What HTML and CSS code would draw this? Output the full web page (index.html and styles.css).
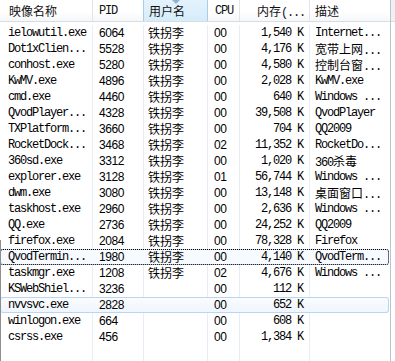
FILE: index.html
```html
<!DOCTYPE html>
<html lang="zh-CN">
<head>
  <meta charset="UTF-8">
  <title>任务管理器 - 进程</title>
  <link rel="stylesheet" href="styles.css">
</head>
<body>

<div class="taskview">
  <div class="list">
    <div class="head">
      <div class="cell name">映像名称</div>
      <div class="cell pid mono">PID</div>
      <div class="cell user sorted">用户名<span class="arrow"></span></div>
      <div class="cell cpu mono">CPU</div>
      <div class="cell mem">内存<span class="mono">(...</span></div>
      <div class="cell desc">描述</div>
    </div>
    <div class="rows" id="rows">
      <!-- 进程行由脚本生成 -->
    </div>
  </div>
  <div class="tail">
    <div class="tail-head"></div>
  </div>
</div>

<script>
  const processes = [
    { name: "ielowutil.exe", pid: "6064", user: "铁拐李", cpu: "00", mem: "1,540 K", desc: "Internet..." },
    { name: "Dot1xClien...", pid: "5528", user: "铁拐李", cpu: "00", mem: "4,176 K", desc: "宽带上网..." },
    { name: "conhost.exe", pid: "5280", user: "铁拐李", cpu: "00", mem: "4,580 K", desc: "控制台窗..." },
    { name: "KwMV.exe", pid: "4896", user: "铁拐李", cpu: "00", mem: "2,028 K", desc: "KwMV.exe" },
    { name: "cmd.exe", pid: "4460", user: "铁拐李", cpu: "00", mem: "640 K", desc: "Windows ..." },
    { name: "QvodPlayer...", pid: "4328", user: "铁拐李", cpu: "00", mem: "39,508 K", desc: "QvodPlayer" },
    { name: "TXPlatform...", pid: "3660", user: "铁拐李", cpu: "00", mem: "704 K", desc: "QQ2009" },
    { name: "RocketDock...", pid: "3468", user: "铁拐李", cpu: "02", mem: "11,352 K", desc: "RocketDo..." },
    { name: "360sd.exe", pid: "3312", user: "铁拐李", cpu: "00", mem: "1,020 K", desc: "360杀毒" },
    { name: "explorer.exe", pid: "3128", user: "铁拐李", cpu: "01", mem: "56,744 K", desc: "Windows ..." },
    { name: "dwm.exe", pid: "3080", user: "铁拐李", cpu: "00", mem: "13,148 K", desc: "桌面窗口..." },
    { name: "taskhost.exe", pid: "2960", user: "铁拐李", cpu: "00", mem: "2,636 K", desc: "Windows ..." },
    { name: "QQ.exe", pid: "2736", user: "铁拐李", cpu: "00", mem: "24,252 K", desc: "QQ2009" },
    { name: "firefox.exe", pid: "2084", user: "铁拐李", cpu: "00", mem: "78,328 K", desc: "Firefox" },
    { name: "QvodTermin...", pid: "1980", user: "铁拐李", cpu: "00", mem: "4,140 K", desc: "QvodTerm..." },
    { name: "taskmgr.exe", pid: "1208", user: "铁拐李", cpu: "02", mem: "4,676 K", desc: "Windows ..." },
    { name: "KSWebShiel...", pid: "3236", user: "", cpu: "00", mem: "112 K", desc: "" },
    { name: "nvvsvc.exe", pid: "2828", user: "", cpu: "00", mem: "652 K", desc: "" },
    { name: "winlogon.exe", pid: "664", user: "", cpu: "00", mem: "608 K", desc: "" },
    { name: "csrss.exe", pid: "456", user: "", cpu: "00", mem: "1,384 K", desc: "" }
  ];

  const focusIndex = 14;
  const hotIndex = 17;
  const rowsBox = document.getElementById('rows');

  // 中文字符不用等宽字体的字距
  function wrapCjk(text) {
    return text.replace(/[\u4e00-\u9fff]+/g, m => `<span class="cjk">${m}</span>`);
  }

  function createRow(p, i) {
    const row = document.createElement('div');
    row.classList.add('row');
    if (i === focusIndex) row.classList.add('focus');
    if (i === hotIndex) row.classList.add('hot');
    row.innerHTML = `
      <div class="cell name mono">${p.name}</div>
      <div class="cell pid num">${p.pid}</div>
      <div class="cell user">${p.user}</div>
      <div class="cell cpu num">${p.cpu}</div>
      <div class="cell mem mono">${p.mem}</div>
      <div class="cell desc mono">${wrapCjk(p.desc)}</div>
    `;
    return row;
  }

  processes.forEach((p, i) => rowsBox.appendChild(createRow(p, i)));

  const filler = document.createElement('div');
  filler.classList.add('row', 'filler');
  filler.innerHTML = '<div class="cell"></div>'.repeat(6);
  rowsBox.appendChild(filler);
</script>

</body>
</html>
```

FILE: styles.css
```css
/* 基本样式 */
* {
  box-sizing: border-box;
}
body {
  margin: 0;
  font-family: "Noto Sans CJK SC", sans-serif;
  font-size: 12px;
  color: #000;
  background-color: #fff;
}
.taskview {
  display: flex;
  height: 361px;
  overflow: hidden;
}
.list {
  position: relative;
  width: 391px;
  display: flex;
  flex-direction: column;
  border-right: 1px solid #bcc3cb;
}
.list::before {
  content: "";
  position: absolute;
  left: 0;
  top: 240px;
  bottom: 0;
  width: 1px;
  background-color: #8e8e8e;
  z-index: 2;
}
.tail {
  flex: 1;
}
.tail-head {
  height: 22px;
  background-color: #eef0f3;
  border-bottom: 1px solid #d6dde5;
}

.head,
.row {
  display: grid;
  grid-template-columns: 93px 51px 64px 32px 70px 80px;
}
.cell {
  white-space: nowrap;
  overflow: hidden;
}
.mono {
  font-family: "Liberation Mono", monospace;
  letter-spacing: -1.2px;
}
.num {
  font-family: "Liberation Sans", sans-serif;
  letter-spacing: -0.4px;
}
.cjk {
  font-family: "Noto Sans CJK SC", sans-serif;
  letter-spacing: 0;
}

/* 表头 */
.head {
  height: 22px;
  background: linear-gradient(#fff, #fff 55%, #f6f7f9);
  border-bottom: 1px solid #d6dde5;
}
.head .cell {
  border-right: 1px solid #e1e5ea;
  line-height: 22px;
  color: #111;
}
.head .cell:last-child {
  border-right: none;
}
.head .sorted {
  position: relative;
  background: linear-gradient(#e4f3fd, #d6ecfa);
  border-left: 1px solid #a9cde9;
  border-right: 1px solid #a9cde9;
  margin-left: -1px;
}
.head .arrow {
  position: absolute;
  top: 0;
  left: 28px;
  width: 0;
  height: 0;
  border-left: 4px solid transparent;
  border-right: 4px solid transparent;
  border-top: 4px solid #93b2d2;
}
.head .name {
  padding-left: 9px;
}
.head .pid {
  padding-left: 6px;
}
.head .user {
  padding-left: 5px;
}
.head .cpu {
  padding-left: 7px;
}
.head .mem {
  text-align: right;
  padding-right: 4px;
}
.head .desc {
  padding-left: 5px;
}

/* 进程行 */
.rows {
  flex: 1;
  display: flex;
  flex-direction: column;
  padding-top: 3px;
}
.row {
  height: 16px;
  line-height: 16px;
}
.row .cell {
  border-right: 1px solid #e6edf5;
}
.row .cell:last-child {
  border-right: none;
}
.row .name {
  padding-left: 8px;
}
.row .pid {
  padding-left: 6px;
}
.row .user {
  padding-left: 4px;
}
.row .cpu {
  padding-left: 6px;
}
.row .mem {
  text-align: right;
  padding-right: 6px;
}
.row .desc {
  padding-left: 5px;
}
.row.filler {
  flex: 1;
  height: auto;
}
.row.focus,
.row.hot {
  border-radius: 3px;
  margin-right: 1px;
}
.row.focus .cell,
.row.hot .cell {
  border-right-color: transparent;
}
.row.focus {
  background-color: #f7fafe;
  box-shadow: inset 0 0 0 1px #c4daf3;
  outline: 1px dotted #000;
  outline-offset: -1px;
}
.row.hot {
  background: linear-gradient(#fbfcfe, #eef5fd);
  box-shadow: inset 0 0 0 1px #b9d5f5;
}
```
